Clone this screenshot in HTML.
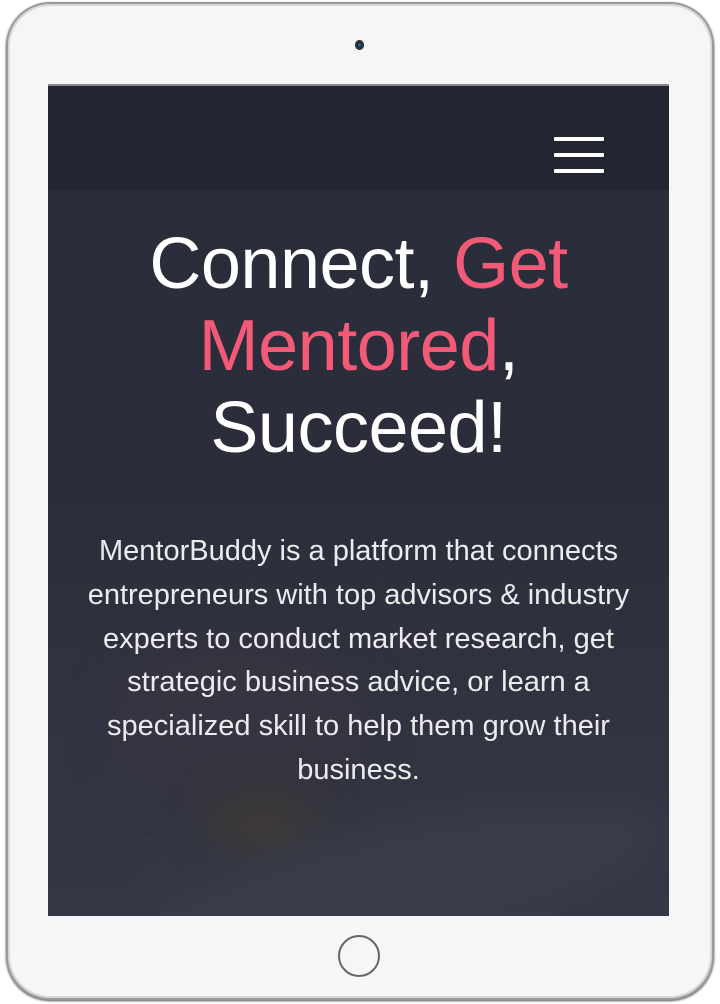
<!DOCTYPE html>
<html><head><style>
html,body{margin:0;padding:0;background:#fff;width:720px;height:1004px;overflow:hidden;font-family:"Liberation Sans",sans-serif}
.frame{position:absolute;left:6px;top:2px;width:704px;height:994px;border-radius:44px;background:#f5f6f8;border:2px solid #9a9a9a;box-shadow:inset 0 0 0 2px #d8d8d8,0 1px 2px #555}
.cam{position:absolute;left:355px;top:40px;width:9px;height:10px;border-radius:50%;background:#223;box-shadow:inset 0 0 0 2px #333}
.cam:after{content:"";position:absolute;left:3px;top:3px;width:3px;height:4px;border-radius:50%;background:#1a5ea0}
.home{position:absolute;left:338px;top:935px;width:42px;height:42px;border-radius:50%;border:2px solid #666;box-sizing:border-box}
.screen{position:absolute;left:48px;top:84px;width:621px;height:832px;background:linear-gradient(180deg,#2a2d39 0%,#2b2e3a 50%,#313340 75%,#343745 100%);overflow:hidden}
.head{position:absolute;left:0;top:0;width:621px;height:106px;background:#232632;border-top:2px solid #888;box-sizing:border-box}
.bar{position:absolute;left:506px;width:50px;height:4px;background:#fff;border-radius:1px}
.blob{position:absolute;border-radius:50%;filter:blur(20px)}
h1{position:absolute;left:-50px;top:139px;width:721px;margin:0;text-align:center;color:#fff;font-weight:normal;font-size:72px;line-height:82px;letter-spacing:-0.5px;white-space:nowrap}
h1 span{color:#f35a78}
p{position:absolute;left:-40px;top:446px;width:701px;margin:0;text-align:center;color:#ececee;font-size:29px;line-height:43.8px;white-space:nowrap;letter-spacing:0}
</style></head><body>
<div class="frame"></div>
<div class="cam"></div>
<div class="screen">
<div class="blob" style="left:60px;top:560px;width:260px;height:160px;background:#363440"></div>
<div class="blob" style="left:160px;top:710px;width:110px;height:60px;background:#3e3a36"></div>
<div class="blob" style="left:100px;top:740px;width:520px;height:120px;background:#393c49;transform:rotate(-12deg)"></div>
<div class="head">
<div class="bar" style="top:51px"></div>
<div class="bar" style="top:67px"></div>
<div class="bar" style="top:83px"></div>
</div>
<h1>Connect, <span>Get</span><br><span>Mentored</span>,<br>Succeed!</h1>
<p>MentorBuddy is a platform that connects<br>entrepreneurs with top advisors &amp; industry<br>experts to conduct market research, get<br>strategic business advice, or learn a<br>specialized skill to help them grow their<br>business.</p>
</div>
<div class="home"></div>
</body></html>
